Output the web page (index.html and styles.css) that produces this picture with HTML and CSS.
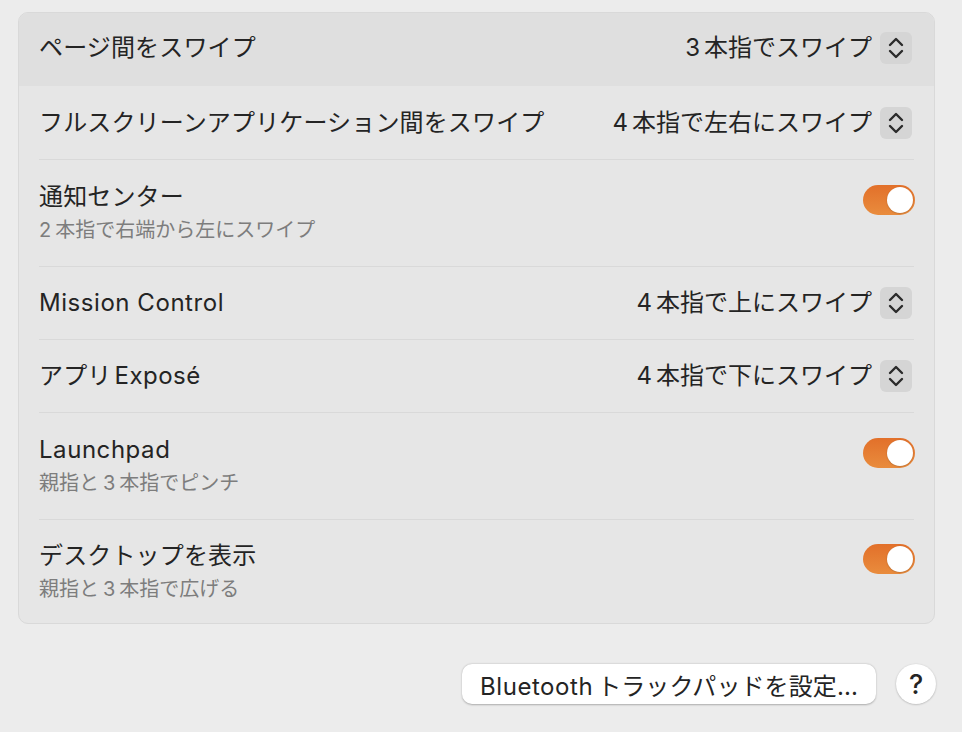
FILE: index.html
```html
<!DOCTYPE html>
<html lang="ja">
<head>
<meta charset="utf-8">
<link rel="stylesheet" href="styles.css">
</head>
<body>
<div class="window">
  <div class="card">
    <div class="row selected">
      <div class="row-inner single first">
        <span class="title">ページ間をスワイプ</span>
        <div class="control">
          <span class="value"><span class="num">3</span>本指でスワイプ</span>
          <span class="stepper"><svg width="32" height="32" viewBox="0 0 32 32"><path d="M10 13 L16 7 L22 13 M10 19 L16 25 L22 19" fill="none" stroke="#2b2b2b" stroke-width="2.4" stroke-linecap="round" stroke-linejoin="round"/></svg></span>
        </div>
      </div>
    </div>
    <div class="row">
      <div class="row-inner single first">
        <span class="title">フルスクリーンアプリケーション間をスワイプ</span>
        <div class="control">
          <span class="value"><span class="num">4</span>本指で左右にスワイプ</span>
          <span class="stepper"><svg width="32" height="32" viewBox="0 0 32 32"><path d="M10 13 L16 7 L22 13 M10 19 L16 25 L22 19" fill="none" stroke="#2b2b2b" stroke-width="2.4" stroke-linecap="round" stroke-linejoin="round"/></svg></span>
        </div>
      </div>
    </div>
    <div class="row">
      <div class="row-inner double">
        <div class="texts">
          <span class="title">通知センター</span>
          <span class="sub"><span class="num">2</span>本指で右端から左にスワイプ</span>
        </div>
        <span class="toggle"><span class="knob"></span></span>
      </div>
    </div>
    <div class="row">
      <div class="row-inner single">
        <span class="title en">Mission Control</span>
        <div class="control">
          <span class="value"><span class="num">4</span>本指で上にスワイプ</span>
          <span class="stepper"><svg width="32" height="32" viewBox="0 0 32 32"><path d="M10 13 L16 7 L22 13 M10 19 L16 25 L22 19" fill="none" stroke="#2b2b2b" stroke-width="2.4" stroke-linecap="round" stroke-linejoin="round"/></svg></span>
        </div>
      </div>
    </div>
    <div class="row">
      <div class="row-inner single">
        <span class="title">アプリ<span class="lat">Exposé</span></span>
        <div class="control">
          <span class="value"><span class="num">4</span>本指で下にスワイプ</span>
          <span class="stepper"><svg width="32" height="32" viewBox="0 0 32 32"><path d="M10 13 L16 7 L22 13 M10 19 L16 25 L22 19" fill="none" stroke="#2b2b2b" stroke-width="2.4" stroke-linecap="round" stroke-linejoin="round"/></svg></span>
        </div>
      </div>
    </div>
    <div class="row">
      <div class="row-inner double">
        <div class="texts">
          <span class="title en">Launchpad</span>
          <span class="sub">親指と<span class="num mid">3</span>本指でピンチ</span>
        </div>
        <span class="toggle"><span class="knob"></span></span>
      </div>
    </div>
    <div class="row">
      <div class="row-inner double last">
        <div class="texts">
          <span class="title">デスクトップを表示</span>
          <span class="sub">親指と<span class="num mid">3</span>本指で広げる</span>
        </div>
        <span class="toggle"><span class="knob"></span></span>
      </div>
    </div>
  </div>
  <div class="footer">
    <button class="btn"><span class="en">Bluetooth</span><span class="jp">トラックパッドを設定...</span></button>
    <button class="help">?</button>
  </div>
</div>
</body>
</html>
```

FILE: styles.css
```css
html, body {
  margin: 0;
  padding: 0;
  background: #ececec;
}
body {
  width: 962px;
  height: 732px;
  overflow: hidden;
  font-family: "Inter", "Noto Sans CJK JP", sans-serif;
  color: #242424;
}
.window {
  padding: 12px 0 0 18px;
}
.card {
  width: 915px;
  background: #e6e6e6;
  border: 1px solid #d9d9d9;
  border-radius: 10px;
  overflow: hidden;
}
.row {
  padding: 0 20px;
}
.row.selected {
  background: #dfdfdf;
}
.row-inner {
  display: flex;
  justify-content: space-between;
  border-top: 1px solid #d9d9d9;
  box-sizing: border-box;
}
.row-inner.first {
  border-top: none;
}
.row-inner.single {
  height: 73px;
  align-items: center;
}
.row.selected .row-inner.single {
  padding-bottom: 4px;
}
.row-inner.double {
  height: 107px;
  align-items: flex-start;
  padding-top: 22px;
}
.row-inner.double.last {
  height: 104px;
  padding-top: 21px;
}
.title {
  font-size: 24px;
  line-height: 30px;
  letter-spacing: 0.15px;
}
.en {
  letter-spacing: 0.55px;
}
.lat {
  margin-left: 3px;
  letter-spacing: 0.5px;
}
.num {
  margin-right: 4px;
}
.num.mid {
  margin-left: 4px;
}
.texts {
  display: flex;
  flex-direction: column;
}
.sub {
  font-size: 20px;
  line-height: 26px;
  margin-top: 5px;
  color: #7d7d7d;
}
.control {
  display: flex;
  align-items: center;
  gap: 8px;
  margin-right: 3px;
}
.value {
  font-size: 24px;
  line-height: 30px;
}
.stepper {
  width: 32px;
  height: 32px;
  border-radius: 6px;
  background: #d5d5d5;
  display: flex;
  margin-right: -1px;
}
.toggle {
  width: 52px;
  height: 30px;
  border-radius: 15px;
  background: linear-gradient(to bottom, #e2702a, #e98c3d);
  display: flex;
  justify-content: flex-end;
  align-items: center;
  padding: 0 2px;
  box-sizing: border-box;
  margin-top: 3px;
  margin-right: -1px;
}
.knob {
  width: 26px;
  height: 26px;
  border-radius: 50%;
  background: #ffffff;
  box-shadow: 0 0.5px 1.5px rgba(0,0,0,0.25);
}
.footer {
  display: flex;
  justify-content: flex-end;
  align-items: center;
  gap: 20px;
  width: 918px;
  margin-top: 40px;
}
.btn {
  height: 40px;
  width: 414px;
  border: none;
  border-radius: 10px;
  background: #ffffff;
  box-shadow: 0 0.5px 2px rgba(0,0,0,0.28);
  font-family: "Inter", "Noto Sans CJK JP", sans-serif;
  font-size: 24px;
  color: #242424;
  padding: 0;
}
.btn .jp {
  margin-left: 4px;
  letter-spacing: 0.1px;
}
.help {
  width: 40px;
  height: 40px;
  border: none;
  border-radius: 50%;
  background: #ffffff;
  box-shadow: 0 0.5px 2px rgba(0,0,0,0.28);
  font-family: "Inter", sans-serif;
  font-size: 27px;
  font-weight: 500;
  color: #242424;
  padding: 0;
}
```
